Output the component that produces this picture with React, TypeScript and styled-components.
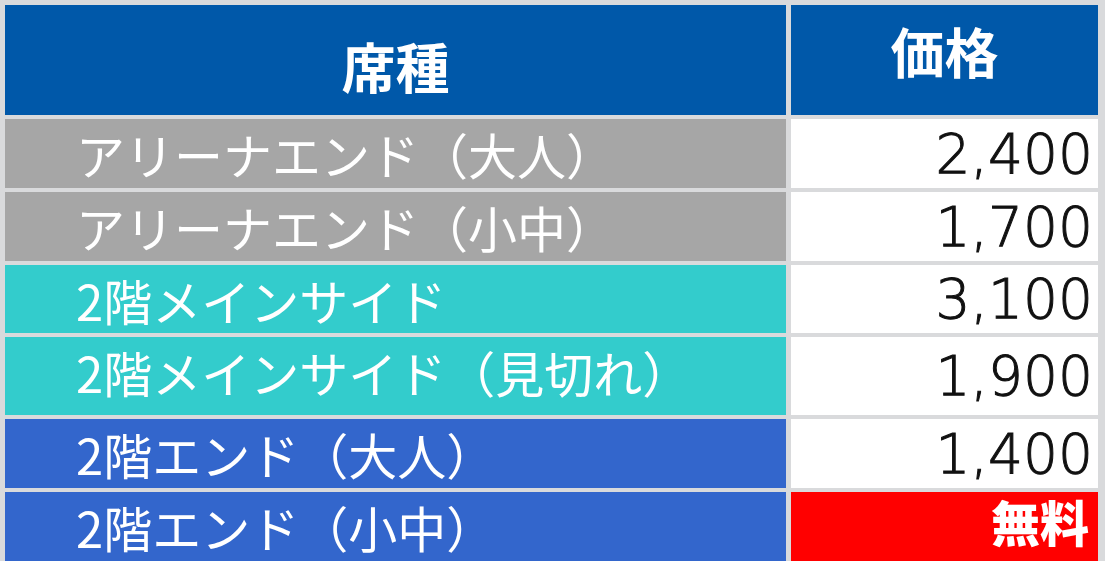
import { Fragment } from 'react'
import styled, { createGlobalStyle } from 'styled-components'

const GlobalStyle = createGlobalStyle`
  html, body {
    margin: 0;
    padding: 0;
    background: #d9dadc;
  }
  body {
    font-family: "Noto Sans CJK JP", "Noto Sans", sans-serif;
  }
`

const colors = {
  border: '#d9dadc',
  header: '#0058a9',
  gray: '#a6a6a6',
  teal: '#33cccc',
  blue: '#3366cc',
  red: '#ff0000',
}

type Tone = 'gray' | 'teal' | 'blue'

const rows: { name: string; price: string; tone: Tone; free?: boolean }[] = [
  { name: 'アリーナエンド（大人）', price: '2,400', tone: 'gray' },
  { name: 'アリーナエンド（小中）', price: '1,700', tone: 'gray' },
  { name: '2階メインサイド', price: '3,100', tone: 'teal' },
  { name: '2階メインサイド（見切れ）', price: '1,900', tone: 'teal' },
  { name: '2階エンド（大人）', price: '1,400', tone: 'blue' },
  { name: '2階エンド（小中）', price: '無料', tone: 'blue', free: true },
]

const Table = styled.div`
  display: grid;
  grid-template-columns: 781px 307px;
  grid-template-rows: 110px 69px 69px 68px 78px 69px 70px;
  column-gap: 5px;
  row-gap: 4px;
  padding: 5px 7px 0 5px;
  width: 1105px;
  height: 561px;
  box-sizing: border-box;
  overflow: hidden;
  background: ${colors.border};
`

const HeadCell = styled.div<{ $top: number }>`
  background: ${colors.header};
  color: #fff;
  font-weight: 700;
  font-size: 54px;
  line-height: 1.2;
  display: flex;
  justify-content: center;
  align-items: flex-start;
  padding-top: ${(p) => p.$top}px;
  box-sizing: border-box;
`

const NameCell = styled.div<{ $tone: Tone }>`
  background: ${(p) => colors[p.$tone]};
  color: #fff;
  font-size: 49px;
  line-height: 1.2;
  padding: 6px 0 0 71px;
  white-space: nowrap;
  box-sizing: border-box;
`

const PriceCell = styled.div<{ $free?: boolean }>`
  background: ${(p) => (p.$free ? colors.red : '#fff')};
  display: flex;
  justify-content: flex-end;
  align-items: ${(p) => (p.$free ? 'flex-start' : 'center')};
  padding: ${(p) => (p.$free ? '0 9px 0 0' : '0 5px 0 0')};
  box-sizing: border-box;
`

const Price = styled.span`
  font-family: "DejaVu Sans", sans-serif;
  font-weight: 300;
  font-size: 55px;
  line-height: 1.2;
  color: #111;
  -webkit-text-stroke: 1px #111;
`

const Free = styled.span`
  font-family: "Noto Sans CJK JP", sans-serif;
  font-weight: 900;
  font-size: 49px;
  line-height: 1.2;
  color: #fff;
`

export default function App() {
  return (
    <>
      <GlobalStyle />
      <Table>
        <HeadCell $top={29}>席種</HeadCell>
        <HeadCell $top={14}>価格</HeadCell>
        {rows.map((r) => (
          <Fragment key={r.name}>
            <NameCell $tone={r.tone}>{r.name}</NameCell>
            <PriceCell $free={r.free}>
              {r.free ? <Free>{r.price}</Free> : <Price>{r.price}</Price>}
            </PriceCell>
          </Fragment>
        ))}
      </Table>
    </>
  )
}
